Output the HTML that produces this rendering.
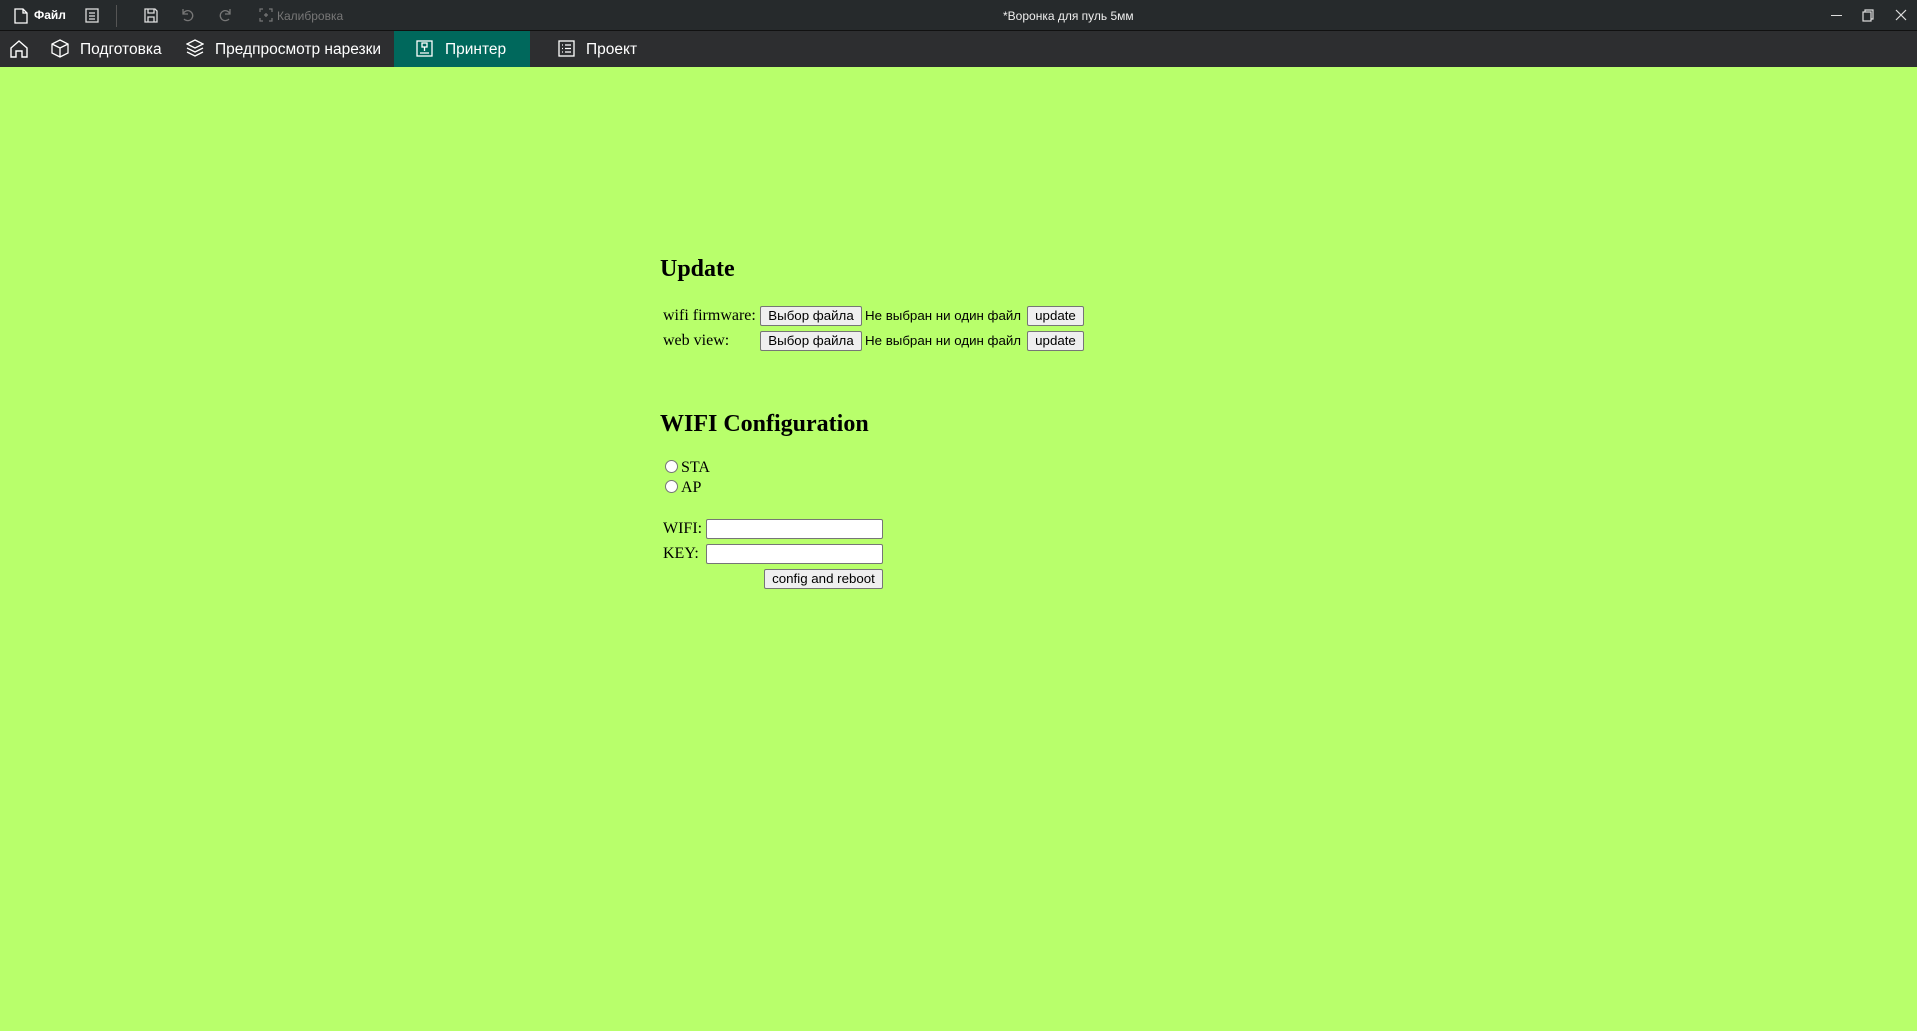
<!DOCTYPE html>
<html><head><meta charset="utf-8"><style>
*{margin:0;padding:0;box-sizing:border-box}
body{width:1917px;height:1031px;overflow:hidden;background:#b8ff6b;position:relative;font-family:"Liberation Serif",serif;color:#000}
.tb{position:absolute;left:0;top:0;width:1917px;height:31px;background:#262a2c;border-bottom:1px solid #111}
.nv{position:absolute;left:0;top:31px;width:1917px;height:36px;background:#2d2e30}
.t{position:absolute;font-family:"Liberation Sans",sans-serif;white-space:nowrap}
.a{position:absolute}
.btn{position:absolute;height:20px;background:#efefef;border:1px solid #767676;border-radius:2px;font:13.3px "Liberation Sans",sans-serif;text-align:center;line-height:18px}
.inp{position:absolute;height:20px;background:#fff;border:1px solid #767676;border-radius:2px}
.lbl{position:absolute;font-size:16px;white-space:nowrap}
.rad{position:absolute;width:13px;height:13px;border:1px solid #767676;border-radius:50%;background:#fff}
h2{position:absolute;font-size:24px;font-weight:bold;white-space:nowrap}
</style></head><body>
<div class="tb">
 <svg class="a" style="left:14px;top:8px" width="14" height="16" viewBox="0 0 14 16" fill="none" stroke="#fff" stroke-width="1.3"><path d="M1 1h8l4 4v10H1z M9 1v4h4"/></svg>
 <div class="t" style="left:34px;top:8px;font-size:12px;color:#fff;font-weight:bold">Файл</div>
 <svg class="a" style="left:85px;top:8px" width="14" height="15" viewBox="0 0 14 15" fill="none" stroke="#ddd" stroke-width="1.3"><rect x="1" y="1" width="12" height="13"/><path d="M4 5h6M4 8h6M4 11h6"/></svg>
 <div class="a" style="left:116px;top:5px;width:1px;height:22px;background:#555"></div>
 <svg class="a" style="left:144px;top:8px" width="14" height="15" viewBox="0 0 14 15" fill="none" stroke="#ddd" stroke-width="1.3"><path d="M1 1h10l2 2v11H1z M4 1v4h6V1 M4 14V9h6v5"/></svg>
 <svg class="a" style="left:180px;top:8px" width="14" height="14" viewBox="0 0 14 14" fill="none" stroke="#777" stroke-width="1.3"><path d="M3 6a5 5 0 1 1 1 5 M3 1v5h5"/></svg>
 <svg class="a" style="left:219px;top:8px" width="14" height="14" viewBox="0 0 14 14" fill="none" stroke="#777" stroke-width="1.3"><path d="M11 6a5 5 0 1 0-1 5 M11 1v5H6"/></svg>
 <svg class="a" style="left:259px;top:8px" width="14" height="14" viewBox="0 0 14 14" fill="none" stroke="#777" stroke-width="1.2"><path d="M1 4V1h3M10 1h3v3M13 10v3h-3M4 13H1v-3M7 5v4M5 7h4"/></svg>
 <div class="t" style="left:277px;top:9px;font-size:12px;color:#777">Калибровка</div>
 <div class="t" style="left:1003px;top:9px;font-size:12px;color:#eee">*Воронка для пуль 5мм</div>
 <div class="a" style="left:1831px;top:15px;width:11px;height:1px;background:#ddd"></div>
 <svg class="a" style="left:1862px;top:9px" width="12" height="13" viewBox="0 0 12 13" fill="none" stroke="#ddd" stroke-width="1.2"><rect x="1" y="3" width="8" height="9"/><path d="M3 3V1h8v9H9"/></svg>
 <svg class="a" style="left:1895px;top:9px" width="12" height="12" viewBox="0 0 12 12" stroke="#ddd" stroke-width="1.2"><path d="M1 1l10 10M11 1L1 11"/></svg>
</div>
<div class="nv">
 <svg class="a" style="left:10px;top:9px" width="18" height="18" viewBox="0 0 18 18" fill="none" stroke="#fff" stroke-width="1.4"><path d="M1 8L9 1l8 7v9h-5v-6H6v6H1z"/></svg>
 <svg class="a" style="left:51px;top:8px" width="18" height="19" viewBox="0 0 18 19" fill="none" stroke="#fff" stroke-width="1.3"><path d="M9 1l8 4v9l-8 4-8-4V5z M1 5l8 4 8-4 M9 9v9"/></svg>
 <div class="t" style="left:80px;top:10px;font-size:15.5px;color:#fff">Подготовка</div>
 <svg class="a" style="left:186px;top:8px" width="18" height="20" viewBox="0 0 18 20" fill="none" stroke="#fff" stroke-width="1.3"><path d="M9 1l8 4-8 4-8-4z M1 9l8 4 8-4 M1 13l8 4 8-4"/></svg>
 <div class="t" style="left:215px;top:10px;font-size:15.5px;color:#fff">Предпросмотр нарезки</div>
 <div class="a" style="left:394px;top:0;width:136px;height:36px;background:#00685c"></div>
 <svg class="a" style="left:416px;top:9px" width="17" height="17" viewBox="0 0 17 17" fill="none" stroke="#fff" stroke-width="1.3"><rect x="1" y="1" width="15" height="15"/><rect x="6" y="3" width="5" height="4"/><path d="M8.5 7v4M4 13h9"/></svg>
 <div class="t" style="left:445px;top:10px;font-size:15.5px;color:#fff">Принтер</div>
 <svg class="a" style="left:558px;top:9px" width="17" height="17" viewBox="0 0 17 17" fill="none" stroke="#fff" stroke-width="1.3"><rect x="1" y="1" width="15" height="15"/><path d="M4 5h1M7 5h6M4 8.5h1M7 8.5h6M4 12h1M7 12h6"/></svg>
 <div class="t" style="left:586px;top:10px;font-size:15.5px;color:#fff">Проект</div>
</div>

<h2 style="left:660px;top:256px">Update</h2>
<div class="lbl" style="left:663px;top:307px">wifi firmware:</div>
<div class="btn" style="left:760px;top:306px;width:102px">Выбор файла</div>
<div class="t" style="left:865px;top:308px;font-size:13.3px">Не выбран ни один файл</div>
<div class="btn" style="left:1027px;top:306px;width:57px">update</div>
<div class="lbl" style="left:663px;top:332px">web view:</div>
<div class="btn" style="left:760px;top:331px;width:102px">Выбор файла</div>
<div class="t" style="left:865px;top:333px;font-size:13.3px">Не выбран ни один файл</div>
<div class="btn" style="left:1027px;top:331px;width:57px">update</div>

<h2 style="left:660px;top:411px">WIFI Configuration</h2>
<div class="rad" style="left:665px;top:460px"></div>
<div class="lbl" style="left:681px;top:459px">STA</div>
<div class="rad" style="left:665px;top:480px"></div>
<div class="lbl" style="left:681px;top:479px">AP</div>
<div class="lbl" style="left:663px;top:520px">WIFI:</div>
<div class="inp" style="left:706px;top:519px;width:177px"></div>
<div class="lbl" style="left:663px;top:545px">KEY:</div>
<div class="inp" style="left:706px;top:544px;width:177px"></div>
<div class="btn" style="left:764px;top:569px;width:119px">config and reboot</div>
</body></html>
